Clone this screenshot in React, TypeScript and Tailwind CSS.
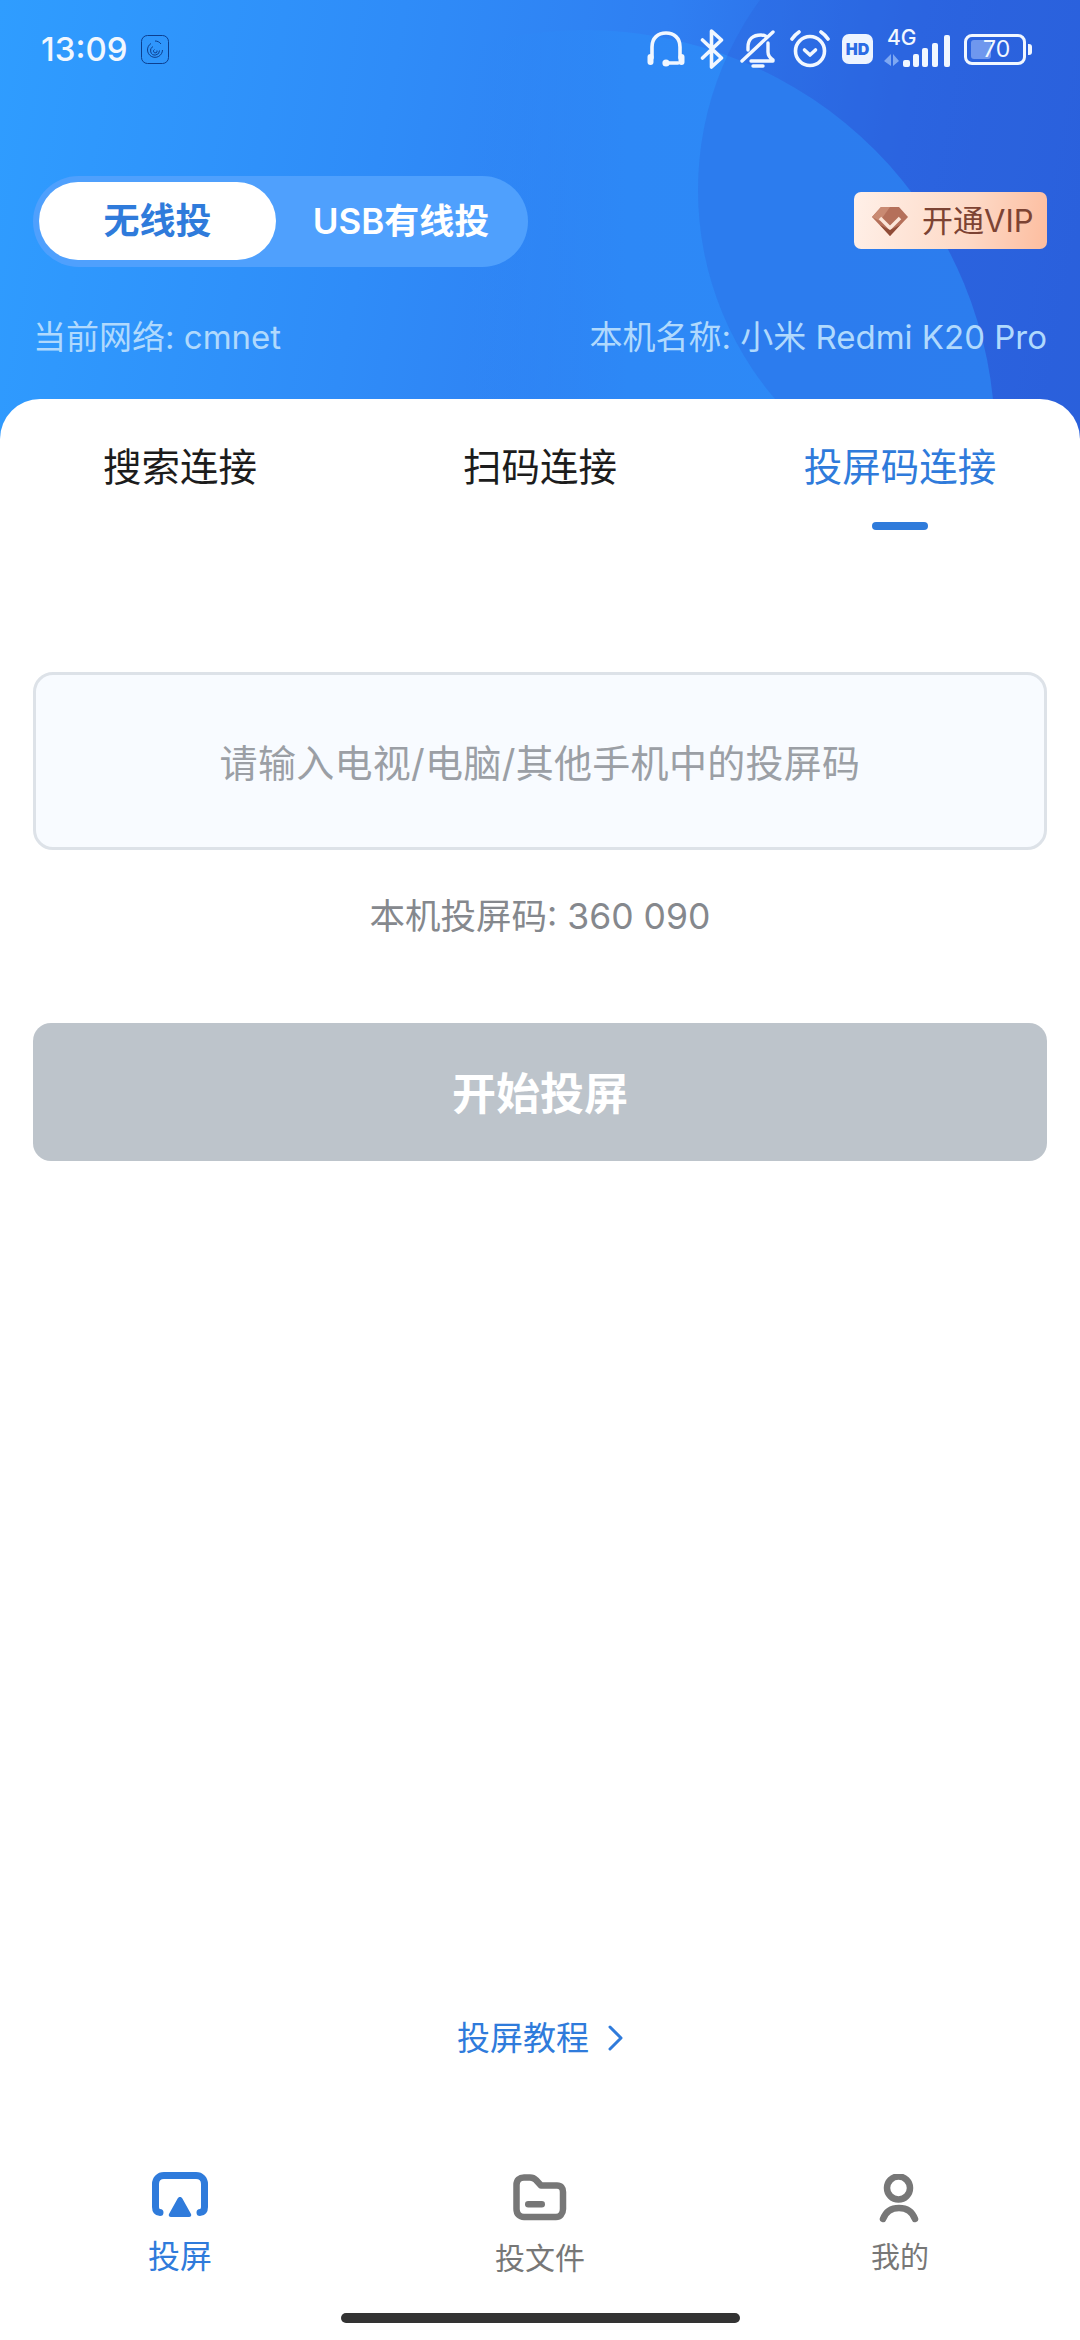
const sans = 'font-["Inter","Noto_Sans_CJK_SC",sans-serif]';

function StatusIcons() {
  return (
    <div className="flex items-center">
      {/* headphones */}
      <svg width="38" height="38" viewBox="0 0 38 38" fill="none" stroke="#f1f7ff" strokeWidth="3.6" strokeLinecap="round">
        <path d="M5 28V17C5 8 11 3 19 3s14 5 14 14v11" />
        <rect x="0.5" y="24" width="6" height="11" rx="3" fill="#f1f7ff" stroke="none" />
        <rect x="31.5" y="24" width="6" height="11" rx="3" fill="#f1f7ff" stroke="none" />
        <path d="M19 33h12" />
        <circle cx="19" cy="33" r="3.6" fill="#f1f7ff" stroke="none" />
      </svg>
      {/* bluetooth */}
      <svg className="ml-[15px]" width="25" height="40" viewBox="0 0 25 40" fill="none" stroke="#f1f7ff" strokeWidth="3.6" strokeLinecap="round" strokeLinejoin="round">
        <path d="M2.5 11l19 18L11.5 38V2l10 9-19 18" />
      </svg>
      {/* bell off */}
      <svg className="ml-[15px]" width="36" height="38" viewBox="0 0 36 38" fill="none" stroke="#f1f7ff" strokeWidth="3.4" strokeLinecap="round" strokeLinejoin="round">
        <path d="M8 20V17C8 9 13 5 21 5c2 0 4 .6 5 1.400" />
        <path d="M28 13v9c0 3 2 6 5 8v1H11" />
        <path d="M2 31L33 2" />
        <path d="M13 36h10" />
      </svg>
      {/* alarm */}
      <svg className="ml-[14px]" width="40" height="38" viewBox="0 0 40 38" fill="none" stroke="#f1f7ff" strokeWidth="3.6" strokeLinecap="round" strokeLinejoin="round">
        <circle cx="20" cy="21" r="14.500" />
        <path d="M2 9c2-3 4-5 7-7M38 9c-2-3-4-5-7-7" />
        <path d="M14.500 20l5.500 5 5.500-5" />
      </svg>
      {/* hd */}
      <div className="ml-[12px] w-[31px] h-[30px] rounded-[7px] bg-[#edf4ff] flex items-center justify-center">
        <span className={`${sans} text-[16px] leading-none font-black text-[#2b6ce4]`}>HD</span>
      </div>
      {/* 4g + signal */}
      <div className="relative ml-[11px] w-[68px] h-[38px]">
        <span className={`absolute left-[3px] -top-[1px] ${sans} text-[21px] leading-[18px] font-medium text-[#f1f7ff]`}>4G</span>
        <svg className="absolute left-0 top-0" width="68" height="38" viewBox="0 0 68 38" fill="#f1f7ff">
          <path d="M7 24v12L0 31zM9 24v12l6-5z" fill="#7ea8f2" />
          <rect x="19" y="30" width="7" height="7" rx="2" />
          <rect x="29" y="24" width="6" height="13" rx="2" />
          <rect x="38" y="18" width="6" height="19" rx="2" />
          <rect x="48" y="13" width="6" height="24" rx="2" />
          <rect x="60" y="5" width="6" height="32" rx="2" />
        </svg>
      </div>
      {/* battery */}
      <div className="ml-[12px] relative w-[62px] h-[31px] rounded-[8px] border-[3.500px] border-[#f1f7ff] flex items-center">
        <div className="absolute left-[4px] top-[3px] bottom-[3px] w-[20px] rounded-[3px] bg-[#6f97ee]" />
        <span className={`relative ml-[16px] ${sans} text-[23px] leading-none text-[#f1f7ff]`}>70</span>
      </div>
      <div className="ml-[2px] w-[4px] h-[11px] rounded-r-[3px] bg-[#f1f7ff]" />
    </div>
  );
}

function HeaderBg() {
  return (
    <div className="absolute inset-0 overflow-hidden bg-[linear-gradient(100deg,#2f9dff_0%,#2f8cf8_35%,#2f7ff2_58%,#2b66e2_80%,#2a60dc_100%)]">
      <div className="absolute left-[175px] top-[30px] w-[820px] h-[820px] rounded-full bg-[linear-gradient(90deg,#2d8af700_0%,#2d8af700_35%,#2d88f6_55%,#2d8af7_100%)]" />
      <div className="absolute left-[698px] -top-[132px] w-[644px] h-[644px] rounded-full bg-[#2a60dc]/30" />
    </div>
  );
}

function Diamond() {
  return (
    <svg width="36" height="30" viewBox="0 0 36 30">
      <path d="M9 1h18l9 10-18 19L0 11z" fill="#b5705a" />
      <path d="M9 1h9L8 15 0 11z" fill="#c98a72" />
      <path d="M8 12l10 10 10-10" fill="none" stroke="#fbe5d8" strokeWidth="3.500" />
      <path d="M18 30L8 19l10 5 10-5z" fill="#8f4c38" />
    </svg>
  );
}

export default function App() {
  return (
    <div className={`${sans} w-[1080px] h-[2340px] bg-white flex flex-col overflow-hidden`}>
      <div className="relative h-[440px] shrink-0">
        <HeaderBg />
        <div className="relative">
          <div className="flex items-center justify-between pl-[41px] pr-[48px] h-[98px]">
            <div className="flex items-center">
              <span className="text-[33px] leading-none font-medium text-[#f1f7ff]">13:09</span>
              <svg className="ml-[14px]" width="28" height="29" viewBox="0 0 28 29" fill="none" stroke="#0d3f8f" strokeWidth="1">
                <rect x="0.500" y="0.500" width="27" height="28" rx="6" />
                <path d="M10 8.500a7.500 7.500 0 1 0 11.500 6.500" />
                <path d="M12 11.500a4.500 4.500 0 1 0 6.500 4" />
                <path d="M13.500 14.500a1.800 1.800 0 1 0 2.500 1" />
                <path d="M14 6c2.500 0 4.500 1 6 3" />
              </svg>
            </div>
            <StatusIcons />
          </div>

          <div className="flex items-start justify-between pl-[33px] pr-[33px] mt-[78px]">
            <div className="flex w-[495px] h-[91px] rounded-full bg-[#4fa0fd] p-[6px]">
              <div className="w-[237px] h-[78px] rounded-full bg-white flex items-center justify-center">
                <span className="text-[36px] leading-none font-bold text-[#2f7bdb]">无线投</span>
              </div>
              <div className="flex-1 flex items-center justify-center pl-[4px]">
                <span className="text-[35px] leading-none font-semibold text-white">USB有线投</span>
              </div>
            </div>
            <div className="mt-[16px] w-[193px] h-[57px] rounded-[7px] bg-[linear-gradient(100deg,#fff0e8_0%,#fdd9c6_60%,#fdbd9f_100%)] flex items-center pl-[18px]">
              <Diamond />
              <span className="ml-[14px] text-[31px] leading-none text-[#7c4333]">开通VIP</span>
            </div>
          </div>

          <div className="flex items-center justify-between px-[33px] mt-[50px] text-[33px] leading-[40px] text-[#b0d9fd]">
            <span>当前网络: cmnet</span>
            <span>本机名称: 小米 Redmi K20 Pro</span>
          </div>
        </div>
      </div>

      <div className="relative -mt-[41px] flex-1 flex flex-col rounded-t-[40px] bg-white">
        <div className="grid grid-cols-3 pt-[46px]">
          <span className="text-center text-[38.500px] leading-[44px] text-[#1c1c1c]">搜索连接</span>
          <span className="text-center text-[38.500px] leading-[44px] text-[#1c1c1c]">扫码连接</span>
          <div className="flex flex-col items-center">
            <span className="text-[38.500px] leading-[44px] text-[#2f7bdb]">投屏码连接</span>
            <div className="mt-[33px] w-[56px] h-[8px] rounded-full bg-[#2f7bdb]" />
          </div>
        </div>

        <div className="px-[33px] mt-[142px]">
          <div className="h-[178px] rounded-[20px] border-[3px] border-[#dde2e8] bg-[#f8fbff] flex items-center justify-center pt-[3px]">
            <span className="text-[38px] leading-none tracking-[0.3px] text-[#9b9fa5]">请输入电视/电脑/其他手机中的投屏码</span>
          </div>
          <p className="mt-[46px] text-center text-[35.500px] leading-[42px] text-[#85888d]">本机投屏码: 360 090</p>
          <div className="mt-[85px] h-[138px] rounded-[18px] bg-[#bdc4cb] flex items-center justify-center pt-[3px]">
            <span className="text-[44px] leading-none font-semibold text-white">开始投屏</span>
          </div>
        </div>

        <div className="mt-auto">
          <div className="flex items-center justify-center pl-[2px]">
            <span className="text-[33px] leading-[40px] text-[#2f7bdb]">投屏教程</span>
            <svg className="ml-[18px]" width="18" height="28" viewBox="0 0 18 28" fill="none" stroke="#2f7bdb" strokeWidth="3" strokeLinecap="round" strokeLinejoin="round">
              <path d="M3 3l11 11L3 25" />
            </svg>
          </div>

          <div className="grid grid-cols-3 mt-[113px] h-[142px]">
            <div className="flex flex-col items-center">
              <svg width="58" height="48" viewBox="0 0 58 48" fill="none">
                <path d="M9 41.500C6 41.500 4.500 39.500 4.500 36V13C4.500 8 8 4.500 13 4.500H45C50 4.500 53.500 8 53.500 13V36C53.500 39.500 52 41.500 49 41.500" stroke="#2f7bdb" strokeWidth="7" strokeLinecap="round" />
                <path d="M29 26c1 0 2 .7 2.500 1.700L40 43c.7 1.500 0 3-2 3H20c-2 0-2.700-1.500-2-3l8.500-15.300c.5-1 1.500-1.700 2.500-1.700z" fill="#2f7bdb" />
              </svg>
              <span className="mt-[20px] text-[32px] leading-[36px] text-[#2f7bdb]">投屏</span>
            </div>
            <div className="flex flex-col items-center pt-[3px]">
              <svg width="54" height="48" viewBox="0 0 54 48" fill="none">
                <path d="M3.500 11C3.500 6 6.500 3.500 11 3.500H17C20 3.500 21.500 4.500 23 6L28 11.500H44C48 11.500 50 14 50 18V35C50 40 47 43 43 43H11C6.500 43 3.500 40 3.500 35Z" stroke="#777" strokeWidth="6.500" strokeLinejoin="round" />
                <rect x="12" y="27" width="20" height="6.500" rx="3.200" fill="#777" />
              </svg>
              <span className="mt-[19px] text-[30px] leading-[34px] text-[#777]">投文件</span>
            </div>
            <div className="flex flex-col items-center pt-[3px]">
              <svg width="42" height="50" viewBox="0 0 42 50" fill="none" stroke="#777" strokeWidth="6.500" strokeLinecap="round">
                <circle cx="19.500" cy="14" r="11.500" />
                <path d="M4 45C7 37 12 34 20 34s13 3 16 11" />
              </svg>
              <span className="mt-[17px] text-[29px] leading-[34px] text-[#777]">我的</span>
            </div>
          </div>

          <div className="mx-auto mb-[17px] w-[399px] h-[10px] rounded-full bg-[#333]" />
        </div>
      </div>
    </div>
  );
}
